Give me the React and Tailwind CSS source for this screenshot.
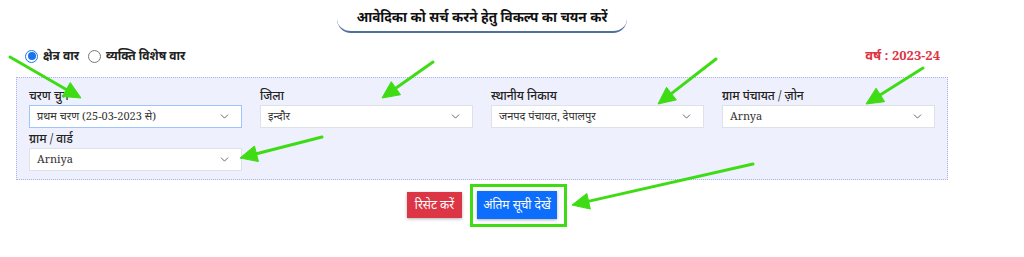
import { ChevronDown } from "lucide-react";

const fields = [
  { label: "चरण चुनें", value: "प्रथम चरण (25-03-2023 से)", focus: true },
  { label: "जिला", value: "इन्दौर" },
  { label: "स्थानीय निकाय", value: "जनपद पंचायत, देपालपुर" },
  { label: "ग्राम पंचायत / ज़ोन", value: "Arnya" },
  { label: "ग्राम / वार्ड", value: "Arniya" },
];

// annotation arrows drawn over the screenshot: [startX, startY, tipX, tipY]
const arrows = [
  [10, 57, 81, 98],
  [433, 62, 382, 98],
  [716, 59, 658, 104],
  [923, 68, 866, 104],
  [322, 137, 240, 158],
  [753, 164, 572, 205],
];

function arrowHead([x1, y1, x2, y2]) {
  const len = Math.hypot(x2 - x1, y2 - y1);
  const ux = (x2 - x1) / len;
  const uy = (y2 - y1) / len;
  const bx = x2 - ux * 17;
  const by = y2 - uy * 17;
  const px = -uy * 8;
  const py = ux * 8;
  return {
    points: `${x2},${y2} ${bx + px},${by + py} ${bx - px},${by - py}`,
    end: [x2 - ux * 12, y2 - uy * 12],
  };
}

function Field({ label, value, focus }) {
  return (
    <div className="flex flex-col">
      <label className="text-[12px] leading-[17px] mb-[1px] text-[#222] font-medium">
        {label}
      </label>
      <div
        className={`h-[23px] bg-white flex items-center justify-between pl-[7px] pr-[10px] text-[11px] text-[#333] border ${
          focus ? "border-[#9ec5fe]" : "border-[#dee2e6]"
        }`}
      >
        <span>{value}</span>
        <ChevronDown size={13} strokeWidth={1.6} className="text-[#555]" />
      </div>
    </div>
  );
}

export default function App() {
  return (
    <div
      className="relative w-[1024px] h-[257px] overflow-hidden bg-white"
      style={{ fontFamily: '"Noto Serif", "Liberation Serif", "Noto Sans", serif' }}
    >
      <div className="ml-4 w-[932px]">
        <div className="flex justify-center">
          <div className="w-[290px] h-[33px] pt-[7px] text-center text-[13.5px] font-bold leading-[20px] text-[#111] border-b-2 border-[#4f6f9f] rounded-b-[14px]">
            आवेदिका को सर्च करने हेतु विकल्प का चयन करें
          </div>
        </div>

        <div className="flex items-center justify-between mt-[14px] pl-[9px] pr-2 h-[18px]">
          <div className="flex items-center text-[12px] font-bold text-[#222]">
            <span className="w-[13px] h-[13px] rounded-full border-[1.5px] border-[#1a73e8] flex items-center justify-center">
              <span className="w-[8px] h-[8px] rounded-full bg-[#1a73e8]" />
            </span>
            <span className="ml-[5px]">क्षेत्र वार</span>
            <span className="ml-[9px] w-[13px] h-[13px] rounded-full border border-[#767676] bg-white" />
            <span className="ml-[5px]">व्यक्ति विशेष वार</span>
          </div>
          <div className="text-[13px] font-bold text-[#dc3545]">वर्ष : 2023-24</div>
        </div>

        <div className="mt-[12px] border border-dotted border-[#a9b3ea] bg-[#eef0fd] pt-[9px] pb-2 px-3 grid grid-cols-4 gap-x-[18px] gap-y-[2px]">
          {fields.map((f) => (
            <Field key={f.label} {...f} />
          ))}
        </div>

        <div className="flex justify-center items-center gap-[15px] mt-[11px]">
          <button className="w-[55px] h-[26px] bg-[#dc3545] text-white text-[12px] shadow-[0_1px_3px_rgba(0,0,0,0.3)]">
            रिसेट करें
          </button>
          <button className="w-[80px] h-[28px] bg-[#0d6efd] text-white text-[12px] shadow-[0_1px_3px_rgba(0,0,0,0.3)]">
            अंतिम सूची देखें
          </button>
        </div>
      </div>

      <svg
        className="absolute inset-0 pointer-events-none"
        width="1024"
        height="257"
        viewBox="0 0 1024 257"
      >
        <rect x="471.5" y="185.5" width="94" height="40" fill="none" stroke="#3fdc16" strokeWidth="3" />
        {arrows.map((a, i) => {
          const h = arrowHead(a);
          return (
            <g key={i} fill="#3fdc16" stroke="#3fdc16">
              <line x1={a[0]} y1={a[1]} x2={h.end[0]} y2={h.end[1]} strokeWidth="3" strokeLinecap="round" />
              <polygon points={h.points} strokeWidth="1" strokeLinejoin="round" />
            </g>
          );
        })}
      </svg>
    </div>
  );
}
